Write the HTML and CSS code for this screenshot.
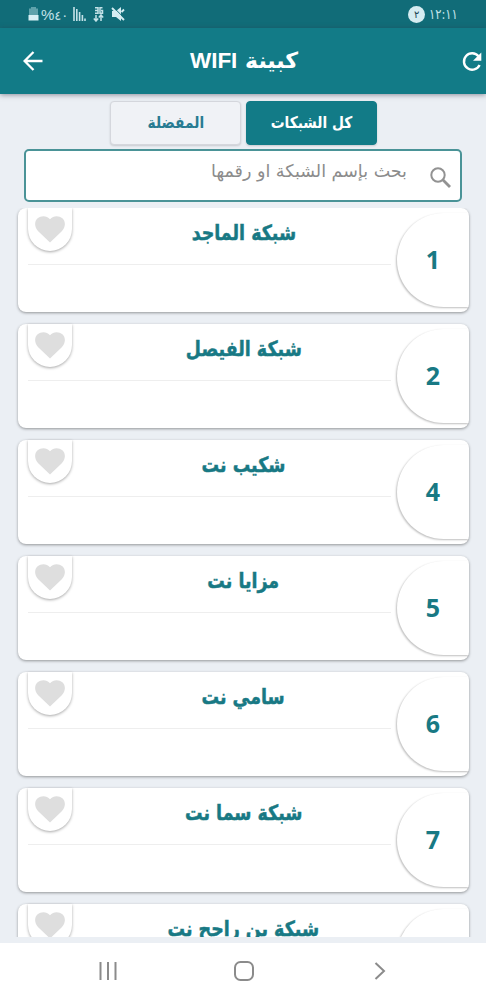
FILE: index.html
```html
<!DOCTYPE html>
<html lang="ar" dir="rtl">
<head>
  <meta charset="UTF-8">
  <title>كبينة WIFI</title>
  <link rel="stylesheet" href="styles.css">
</head>
<body>
<svg class="defs" width="0" height="0">
  <symbol id="heart" viewBox="0 0 30 27"><path d="M15 26.500L3.200 15.300C-.8 11.200-.8 5.300 2.600 2.300 6.200-.8 11.800-.6 15 3.200 18.200-.6 23.800-.8 27.400 2.300 30.800 5.300 30.800 11.200 26.800 15.300z"/></symbol>
</svg>
<div class="phone">
  <div class="status">
    <div class="status-left">
      <svg width="11" height="14" viewBox="0 0 11 14"><path d="M3 0h5v1.500h2V8H1V1.500h2z" fill="#5fa2ab"/><path d="M.5 8h10v5.500H.5z" fill="#d9f0f5"/></svg>
      <span class="battery"><b>%</b>٤٠</span>
      <svg class="signal" width="13" height="14" viewBox="0 0 13 14" stroke="#c4e2e8" stroke-width="1.600"><path d="M1 0v14M3.800 2v12M6.600 5v9M9.400 8v6M12 11.500V14"/></svg>
      <svg class="data" width="11" height="15" viewBox="0 0 11 15" fill="none" stroke="#c4e2e8" stroke-width="1.500"><path d="M2 .8h3v5.500H2M2 3.500h3M9.500.8H7v5.500h2.500V3.500H8M3 14V8M.8 11.500L3 14l2.200-2.500M8 14V8M5.800 10.500L8 8l2.200 2.500"/></svg>
      <svg class="mute" width="14" height="14" viewBox="0 0 14 14"><path d="M1 4h4l5-4v14L5 10H1z" fill="#d5edf2"/><path d="M3 .8l10.500 10.500" stroke="#116c78" stroke-width="1"/><path d="M1 1l12 12M10.500 5l2.500-2.500" stroke="#d5edf2" stroke-width="1.900"/></svg>
    </div>
    <div class="status-right">
      <span class="badge">٢</span>
      <span class="time">١٢:١١</span>
    </div>
  </div>
  <div class="header">
    <svg class="refresh" width="20" height="20" viewBox="0 0 20 20"><path d="M16.500 4.300A8.200 8.200 0 1 0 17.600 13" fill="none" stroke="#fff" stroke-width="2.400"/><path d="M19.300.5v8.300H11z" fill="#fff"/></svg>
    <h1><span>كبينة</span> <b>WIFI</b></h1>
    <svg class="back" width="20" height="20" viewBox="0 0 20 20" fill="none" stroke="#fff" stroke-width="2.300"><path d="M19.500 10H2M10.500 1L1.600 10l8.900 9"/></svg>
  </div>
  <div class="content">
    <div class="tabs">
      <div class="tab active"><span>كل الشبكات</span></div>
      <div class="tab"><span>المفضلة</span></div>
    </div>
    <div class="search">
      <svg width="21" height="21" viewBox="0 0 21 21" fill="none" stroke="#929292" stroke-width="2"><circle cx="8" cy="8" r="6.700"/><path d="M12.800 12.800l7.200 7.200" stroke-width="2.800"/></svg>
      <span>بحث بإسم الشبكة او رقمها</span>
    </div>
    <div class="list">
      <div class="card">
        <div class="num">1</div>
        <div class="name"><span>شبكة الماجد</span></div>
        <div class="fav"><svg><use href="#heart"/></svg></div>
      </div>
      <div class="card">
        <div class="num">2</div>
        <div class="name"><span>شبكة الفيصل</span></div>
        <div class="fav"><svg><use href="#heart"/></svg></div>
      </div>
      <div class="card">
        <div class="num">4</div>
        <div class="name"><span>شكيب نت</span></div>
        <div class="fav"><svg><use href="#heart"/></svg></div>
      </div>
      <div class="card">
        <div class="num">5</div>
        <div class="name"><span>مزايا نت</span></div>
        <div class="fav"><svg><use href="#heart"/></svg></div>
      </div>
      <div class="card">
        <div class="num">6</div>
        <div class="name"><span>سامي نت</span></div>
        <div class="fav"><svg><use href="#heart"/></svg></div>
      </div>
      <div class="card">
        <div class="num">7</div>
        <div class="name"><span>شبكة سما نت</span></div>
        <div class="fav"><svg><use href="#heart"/></svg></div>
      </div>
      <div class="card">
        <div class="num"></div>
        <div class="name"><span>شبكة بن راجح نت</span></div>
        <div class="fav"><svg><use href="#heart"/></svg></div>
      </div>
    </div>
  </div>
  <div class="nav">
    <svg width="18" height="18" viewBox="0 0 18 18"><path d="M1.500 0v18M9 0v18M16.500 0v18"/></svg>
    <svg width="20" height="20" viewBox="0 0 20 20"><rect x="1" y="1" width="18" height="18" rx="5.500"/></svg>
    <svg width="12" height="18" viewBox="0 0 12 18"><path d="M1.500 1l8.500 8-8.500 8"/></svg>
  </div>
</div>
</body>
</html>
```
FILE: styles.css
```css
* {
  margin: 0;
  padding: 0;
  box-sizing: border-box;
}

body {
  font-family: "DejaVu Sans", sans-serif;
  background: #ebeff4;
}

.defs {
  display: block;
  height: 0;
}

.phone {
  width: 486px;
  height: 1000px;
  display: flex;
  flex-direction: column;
  overflow: hidden;
}

.status {
  direction: ltr;
  height: 28px;
  flex: none;
  display: flex;
  align-items: center;
  justify-content: space-between;
  padding: 0 28px;
  background: #116c78;
  color: #c4e2e8;
}

.status-left,
.status-right {
  display: flex;
  align-items: center;
}

.battery {
  width: 27px;
  margin-left: 2px;
  font-size: 13px;
  white-space: nowrap;
}

.battery b {
  font-family: "Liberation Sans", sans-serif;
  font-size: 15px;
  font-weight: normal;
}

.signal {
  margin-left: 5px;
}

.data {
  margin-left: 7px;
}

.mute {
  margin-left: 7px;
}

.badge {
  width: 17px;
  height: 17px;
  margin-right: -2px;
  border-radius: 50%;
  background: #d5ecf1;
  color: #245;
  font-size: 10px;
  line-height: 17px;
  text-align: center;
}

.time {
  font-size: 14px;
  transform: scaleX(.83);
  transform-origin: right;
}

.header {
  height: 66px;
  flex: none;
  display: flex;
  align-items: center;
  justify-content: space-between;
  padding: 0 5px 0 23px;
  background: #127b87;
  color: #fff;
  box-shadow: 0 1px 5px rgba(50, 50, 70, .5);
  z-index: 1;
}

.header .refresh {
  margin: 2px -1px 0 0;
}

.header h1 {
  margin-left: -1px;
  padding-right: 16px;
  font-size: 22px;
  line-height: 30px;
  font-weight: bold;
}

.header h1 b {
  font-family: "Liberation Sans", sans-serif;
  font-size: 22.5px;
}

.content {
  height: 843px;
  flex: none;
  padding: 7px 17px 0 18px;
}

.tabs {
  display: flex;
  justify-content: center;
  gap: 5px;
}

.tab {
  width: 131px;
  height: 44px;
  border: 1px solid #d5d7dd;
  border-radius: 4px;
  background: #f0f2f6;
  box-shadow: 0 1px 2px rgba(0, 0, 0, .15);
  color: #277b92;
  font-size: 16px;
  font-weight: bold;
  line-height: 42px;
  text-align: center;
}

.tab span {
  display: inline-block;
  transform: scaleX(.86);
}

.tab.active {
  border-color: #127b87;
  background: #127b87;
  color: #fff;
}

.search {
  height: 53px;
  margin: 4px 7px 6px 6px;
  padding: 2px 9px 0;
  border: 2px solid #4a9397;
  border-radius: 5px;
  background: #fff;
  display: flex;
  align-items: center;
  gap: 23px;
  color: #8c8c8c;
  font-size: 17.5px;
}

.search svg {
  margin-top: 2px;
}

.search span {
  line-height: 24px;
  padding-bottom: 11px;
}

.list {
  height: 729px;
  overflow: hidden;
  margin: 0 -17px 0 -18px;
  padding: 0 17px 0 18px;
}

.card {
  position: relative;
  height: 104px;
  margin-bottom: 12px;
  border-radius: 8px;
  background: #fff;
  box-shadow: 0 1px 3px rgba(0, 0, 0, .38);
  display: flex;
  justify-content: space-between;
}

.num {
  width: 72px;
  height: 94px;
  flex: none;
  margin-top: 5px;
  border-top-left-radius: 47px;
  border-bottom-left-radius: 47px;
  box-shadow: -1px 1px 2px rgba(0, 0, 0, .25);
  color: #187984;
  font-family: "Noto Sans", sans-serif;
  font-size: 25px;
  font-weight: bold;
  line-height: 92px;
  text-align: center;
}

.name {
  height: 57px;
  flex: 1;
  margin: 0 6px 0 10px;
  border-bottom: 1px solid #eee;
  color: #187984;
  font-size: 21px;
  font-weight: bold;
  line-height: 50px;
  text-align: center;
  padding-left: 68px;
}

.name span {
  display: inline-block;
  transform: scaleX(.83);
  -webkit-text-stroke: .5px #187984;
}

.fav {
  position: absolute;
  left: 10px;
  top: 0;
  width: 44px;
  height: 43px;
  padding: 8px 7px;
  border-radius: 0 0 22px 22px;
  box-shadow: 0 1px 3px rgba(0, 0, 0, .35);
}

.fav svg {
  display: block;
  width: 30px;
  height: 27px;
  fill: #dedede;
}

.nav {
  direction: ltr;
  flex: 1;
  display: flex;
  align-items: center;
  justify-content: space-between;
  padding: 0 100px 2px 99px;
  margin-top: 6px;
  background: #fff;
}

.nav svg {
  fill: none;
  stroke: #8b8b8b;
  stroke-width: 2;
}

.nav svg:nth-child(2) {
  margin-right: 3px;
}
```
